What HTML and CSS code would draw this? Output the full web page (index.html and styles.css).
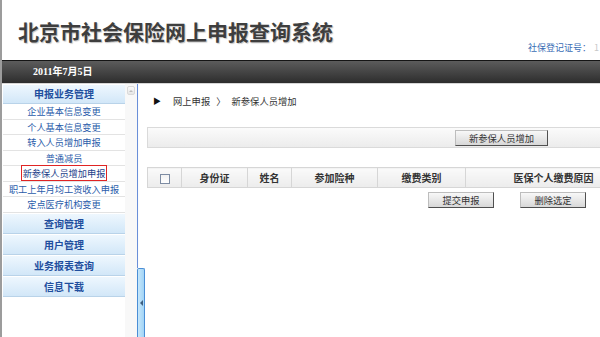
FILE: index.html
```html
<!DOCTYPE html>
<html lang="zh-CN">
<head>
  <meta charset="UTF-8" />
  <meta name="viewport" content="width=device-width, initial-scale=1.0"/>
  <title>北京市社会保险网上申报查询系统</title>
  <link rel="stylesheet" href="styles.css">
</head>
<body>
  <div class="frame">
    <header class="top">
      <h1 class="title">北京市社会保险网上申报查询系统</h1>
      <div class="reg">社保登记证号：<span>1</span></div>
    </header>

    <div class="datebar">2011年7月5日</div>

    <div class="main">
      <aside class="side">
        <nav class="menu">
          <div class="group group-first">申报业务管理</div>
          <ul class="items">
            <li>企业基本信息变更</li>
            <li>个人基本信息变更</li>
            <li>转入人员增加申报</li>
            <li>普通减员</li>
            <li class="active"><span>新参保人员增加申报</span></li>
            <li>职工上年月均工资收入申报</li>
            <li>定点医疗机构变更</li>
          </ul>
          <div class="group">查询管理</div>
          <div class="group">用户管理</div>
          <div class="group">业务报表查询</div>
          <div class="group">信息下载</div>
        </nav>
        <div class="scroll">
          <div class="scroll-up"><i></i></div>
        </div>
      </aside>

      <div class="divider">
        <div class="rail"></div>
        <div class="handle"><i></i></div>
      </div>

      <section class="content">
        <div class="crumb">
          <span class="crumb-arrow">▶</span>
          <span>网上申报</span>
          <span class="crumb-sep">〉</span>
          <span>新参保人员增加</span>
        </div>

        <div class="toolbar">
          <button class="btn btn-add" type="button">新参保人员增加</button>
        </div>

        <table class="grid">
          <colgroup>
            <col style="width:34px">
            <col style="width:66px">
            <col style="width:44px">
            <col style="width:86px">
            <col style="width:88px">
            <col style="width:176px">
            <col style="width:215px">
          </colgroup>
          <thead>
            <tr>
              <th><span class="check"></span></th>
              <th>身份证</th>
              <th>姓名</th>
              <th>参加险种</th>
              <th>缴费类别</th>
              <th>医保个人缴费原因</th>
              <th></th>
            </tr>
          </thead>
        </table>

        <div class="actions">
          <button class="btn btn-act" type="button">提交申报</button>
          <button class="btn btn-act" type="button">删除选定</button>
        </div>
      </section>
    </div>
  </div>
</body>
</html>
```

FILE: styles.css
```css
* {
  box-sizing: border-box;
}

html, body {
  margin: 0;
  height: 100%;
  overflow: hidden;
}

body {
  font-family: "Noto Sans CJK SC", sans-serif;
  background: #fff;
  color: #333;
}

.frame {
  height: 100vh;
  border-left: 2px solid #9c9c9c;
  display: flex;
  flex-direction: column;
}

/* header */

.top {
  height: 60px;
  flex-shrink: 0;
  display: flex;
  align-items: flex-start;
  padding-left: 16px;
}

.title {
  margin: 19px 0 0;
  font-size: 21px;
  line-height: 24px;
  font-weight: bold;
  color: #3e3e3e;
  text-shadow: 1px 1px 1px #c4c4c4;
}

.reg {
  margin-left: auto;
  margin-top: 42px;
  width: 72px;
  white-space: nowrap;
  font-size: 9px;
  line-height: 11px;
  color: #3a6db5;
}

.reg span {
  color: #c8c8c8;
  margin-left: 3px;
}

.datebar {
  height: 24px;
  flex-shrink: 0;
  border-top: 1px solid #151515;
  border-bottom: 1px solid #d6d6d6;
  background: linear-gradient(#5c5c5c, #2d2d2d);
  color: #fff;
  font-family: "Liberation Serif", "Noto Sans CJK SC", serif;
  font-weight: bold;
  font-size: 10px;
  line-height: 22px;
  padding-left: 31px;
}

/* layout */

.main {
  flex: 1;
  display: flex;
  min-height: 0;
}

.side {
  width: 135px;
  flex-shrink: 0;
  display: flex;
  padding-left: 1px;
}

.menu {
  width: 122px;
}

.group {
  height: 21px;
  line-height: 19px;
  text-align: center;
  font-size: 10px;
  font-weight: bold;
  color: #1f4e9e;
  background: linear-gradient(#eef7fe, #d2e7f8);
  border-top: 1px solid #fff;
  border-bottom: 1px solid #b9d3e9;
}

.group-first {
  height: 20px;
  line-height: 18px;
}

.items {
  list-style: none;
  margin: 0;
  padding: 0;
}

.items li {
  height: 15.5px;
  line-height: 14px;
  border-bottom: 1px solid #e3e3e3;
  text-align: center;
  font-size: 9.2px;
  color: #2a5caa;
  white-space: nowrap;
}

.items .active span {
  border: 1px solid #e02424;
  padding: 0 1px;
  color: #1d3f8a;
}

.scroll {
  width: 12px;
  background: #f8f8f8;
  padding: 2px 0 0 2px;
}

.scroll-up {
  width: 8px;
  height: 9px;
  border: 1px solid #dadada;
  border-radius: 2px;
  background: linear-gradient(#fbfbfb, #e6e6e6);
  display: flex;
  align-items: center;
  justify-content: center;
}

.scroll-up i {
  width: 0;
  height: 0;
  border-left: 2px solid transparent;
  border-right: 2px solid transparent;
  border-bottom: 2px solid #bdbdbd;
}

.divider {
  width: 8px;
  flex-shrink: 0;
  display: flex;
  flex-direction: column;
}

.rail {
  flex: 1;
  border-left: 1px solid #6a8fd8;
  background: #fafcff;
  width: 2px;
}

.handle {
  height: 69px;
  border: 1px solid #4a8ed6;
  border-bottom: none;
  border-radius: 2px 2px 0 0;
  background: linear-gradient(90deg, #c6e7fb, #a2d4f6);
  display: flex;
  align-items: center;
  justify-content: center;
}

.handle i {
  width: 0;
  height: 0;
  border-top: 3px solid transparent;
  border-bottom: 3px solid transparent;
  border-right: 3px solid #3d5f80;
}

/* content */

.content {
  flex: 1;
  min-width: 0;
  overflow: hidden;
  padding-left: 2px;
}

.crumb {
  height: 43px;
  padding: 10px 0 0 6px;
  display: flex;
  align-items: flex-start;
  gap: 6px;
  font-size: 9.3px;
  line-height: 14px;
  color: #333;
  white-space: nowrap;
}

.crumb-arrow {
  font-size: 8px;
  color: #111;
  margin-right: 6px;
}

.toolbar {
  width: 709px;
  height: 21px;
  border: 1px solid #dadada;
  background: linear-gradient(#fbfbfb, #ececec);
  display: flex;
  align-items: center;
  justify-content: center;
}

.btn {
  height: 16px;
  padding: 0;
  font-family: inherit;
  font-size: 9.3px;
  line-height: 14px;
  color: #333;
  border: 1px solid;
  border-color: #bdbdbd #4f4f4f #4f4f4f #bdbdbd;
  background: linear-gradient(#f8f8f8, #d8d8d8);
}

.btn-add {
  width: 93px;
}

.btn-act {
  width: 66px;
}

.grid {
  margin-top: 19px;
  width: 709px;
  table-layout: fixed;
  border-collapse: collapse;
}

.grid th {
  height: 20px;
  padding: 0;
  font-size: 10px;
  font-weight: bold;
  color: #333;
  text-align: center;
  border: 1px solid #d6d6d6;
  background: linear-gradient(#fafafa, #ececec);
  white-space: nowrap;
}

.check {
  display: inline-block;
  vertical-align: middle;
  width: 10px;
  height: 10px;
  border: 1px solid #7d8ca3;
  background: linear-gradient(#f2f2f2, #ffffff);
}

.actions {
  width: 709px;
  margin-top: 4px;
  padding-left: 11px;
  display: flex;
  justify-content: center;
  gap: 26px;
}
```
